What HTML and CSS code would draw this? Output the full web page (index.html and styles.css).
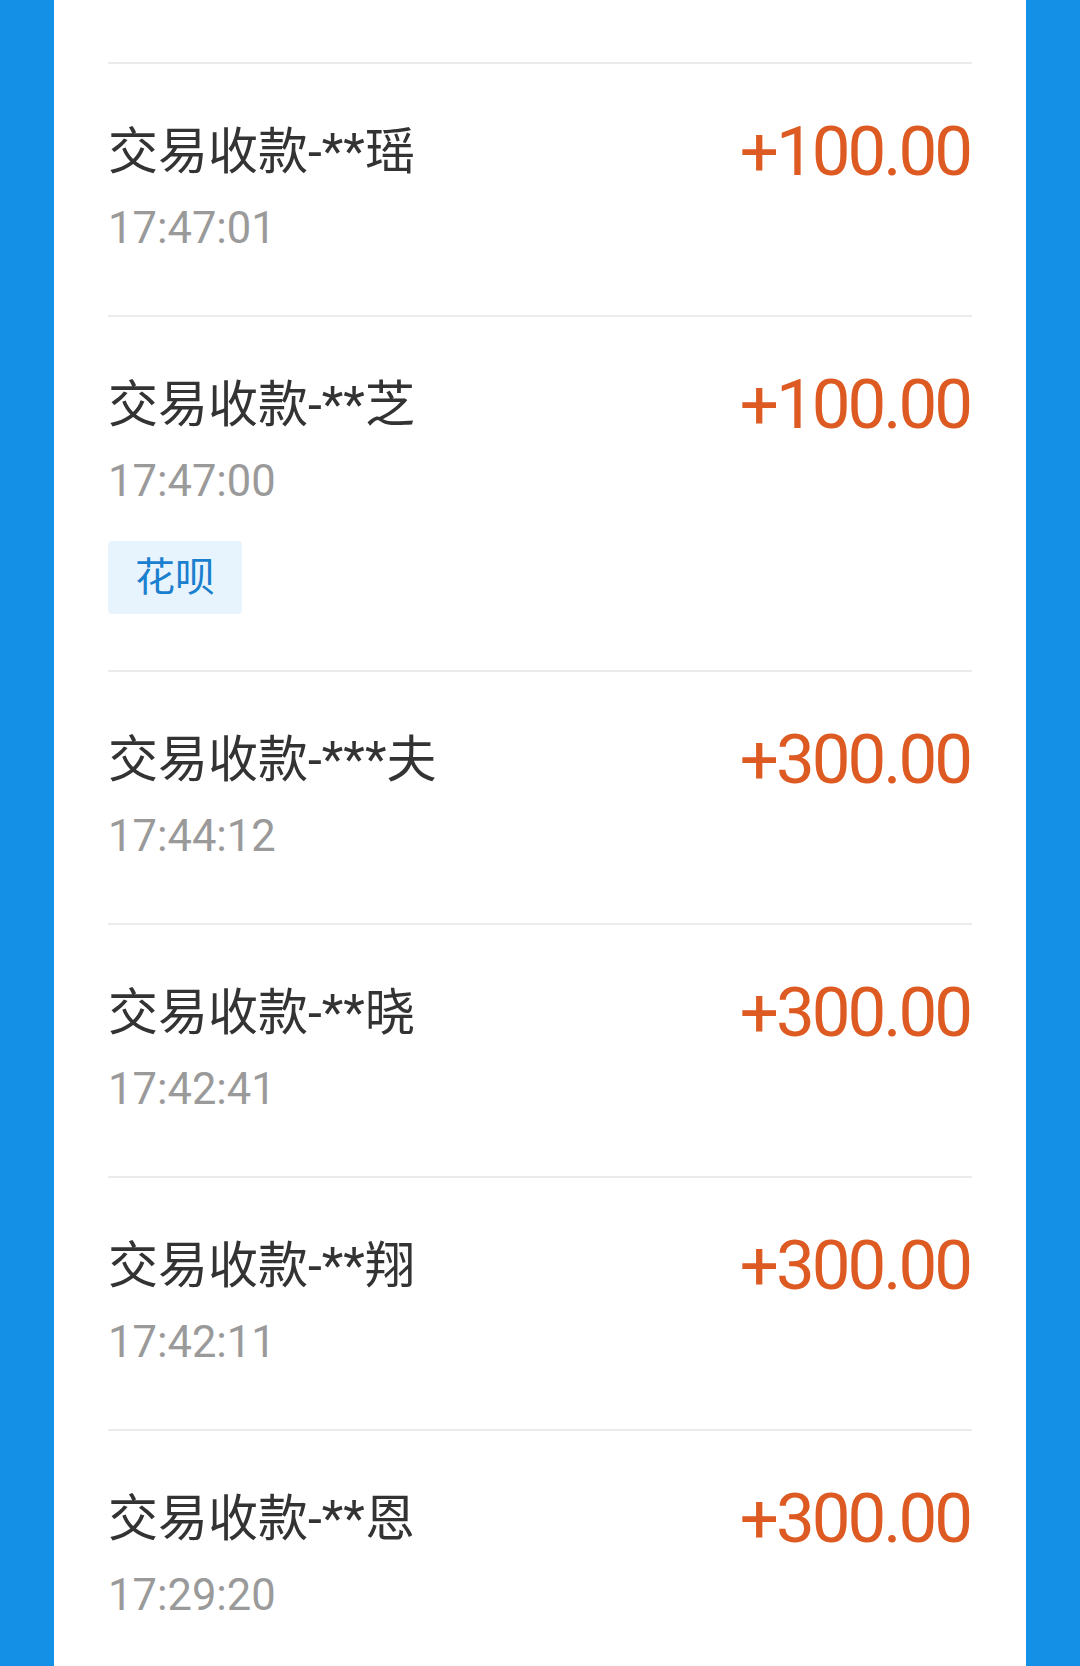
FILE: index.html
```html
<!DOCTYPE html>
<html lang="zh-CN">
<head>
<meta charset="utf-8">
<title>账单</title>
<link rel="stylesheet" href="styles.css">
</head>
<body>
<div class="card">
  <ul class="list">
    <li class="row">
      <div class="info">
        <div class="title">交易收款-**瑶</div>
        <div class="time">17:47:01</div>
      </div>
      <div class="amount">+100.00</div>
    </li>
    <li class="row">
      <div class="info">
        <div class="title">交易收款-**芝</div>
        <div class="time">17:47:00</div>
        <div class="tag">花呗</div>
      </div>
      <div class="amount">+100.00</div>
    </li>
    <li class="row">
      <div class="info">
        <div class="title">交易收款-***夫</div>
        <div class="time">17:44:12</div>
      </div>
      <div class="amount">+300.00</div>
    </li>
    <li class="row">
      <div class="info">
        <div class="title">交易收款-**晓</div>
        <div class="time">17:42:41</div>
      </div>
      <div class="amount">+300.00</div>
    </li>
    <li class="row">
      <div class="info">
        <div class="title">交易收款-**翔</div>
        <div class="time">17:42:11</div>
      </div>
      <div class="amount">+300.00</div>
    </li>
    <li class="row">
      <div class="info">
        <div class="title">交易收款-**恩</div>
        <div class="time">17:29:20</div>
      </div>
      <div class="amount">+300.00</div>
    </li>
  </ul>
</div>
</body>
</html>
```

FILE: styles.css
```css
html, body {
  margin: 0;
  padding: 0;
}
body {
  background: #1590e7;
  height: 1666px;
  overflow: hidden;
  font-family: Roboto, "Noto Sans CJK SC", sans-serif;
}
.card {
  background: #ffffff;
  margin: 0 54px;
  height: 1666px;
  padding: 62px 54px 0;
  box-sizing: border-box;
}
.list {
  list-style: none;
  margin: 0;
  padding: 0;
}
.row {
  border-top: 2px solid #ebebeb;
  display: flex;
  justify-content: space-between;
  align-items: flex-start;
}
.info {
  padding: 58px 0 61px;
  display: flex;
  flex-direction: column;
  align-items: flex-start;
}
.title {
  font-size: 50px;
  line-height: 60px;
  color: #333333;
}
.time {
  margin-top: 22px;
  font-size: 43.5px;
  line-height: 50px;
  color: #9a9a9a;
}
.tag {
  margin-top: 34px;
  margin-bottom: -5px;
  height: 73px;
  padding: 0 27px;
  box-sizing: border-box;
  display: flex;
  align-items: center;
  background: #e8f4fd;
  border-radius: 4px;
  color: #1a7fcf;
  font-size: 40px;
  line-height: 1;
}
.amount {
  padding-top: 48px;
  padding-right: 2px;
  font-size: 69px;
  font-weight: 400;
  line-height: 80px;
  letter-spacing: -3px;
  color: #dd5a22;
}
```
